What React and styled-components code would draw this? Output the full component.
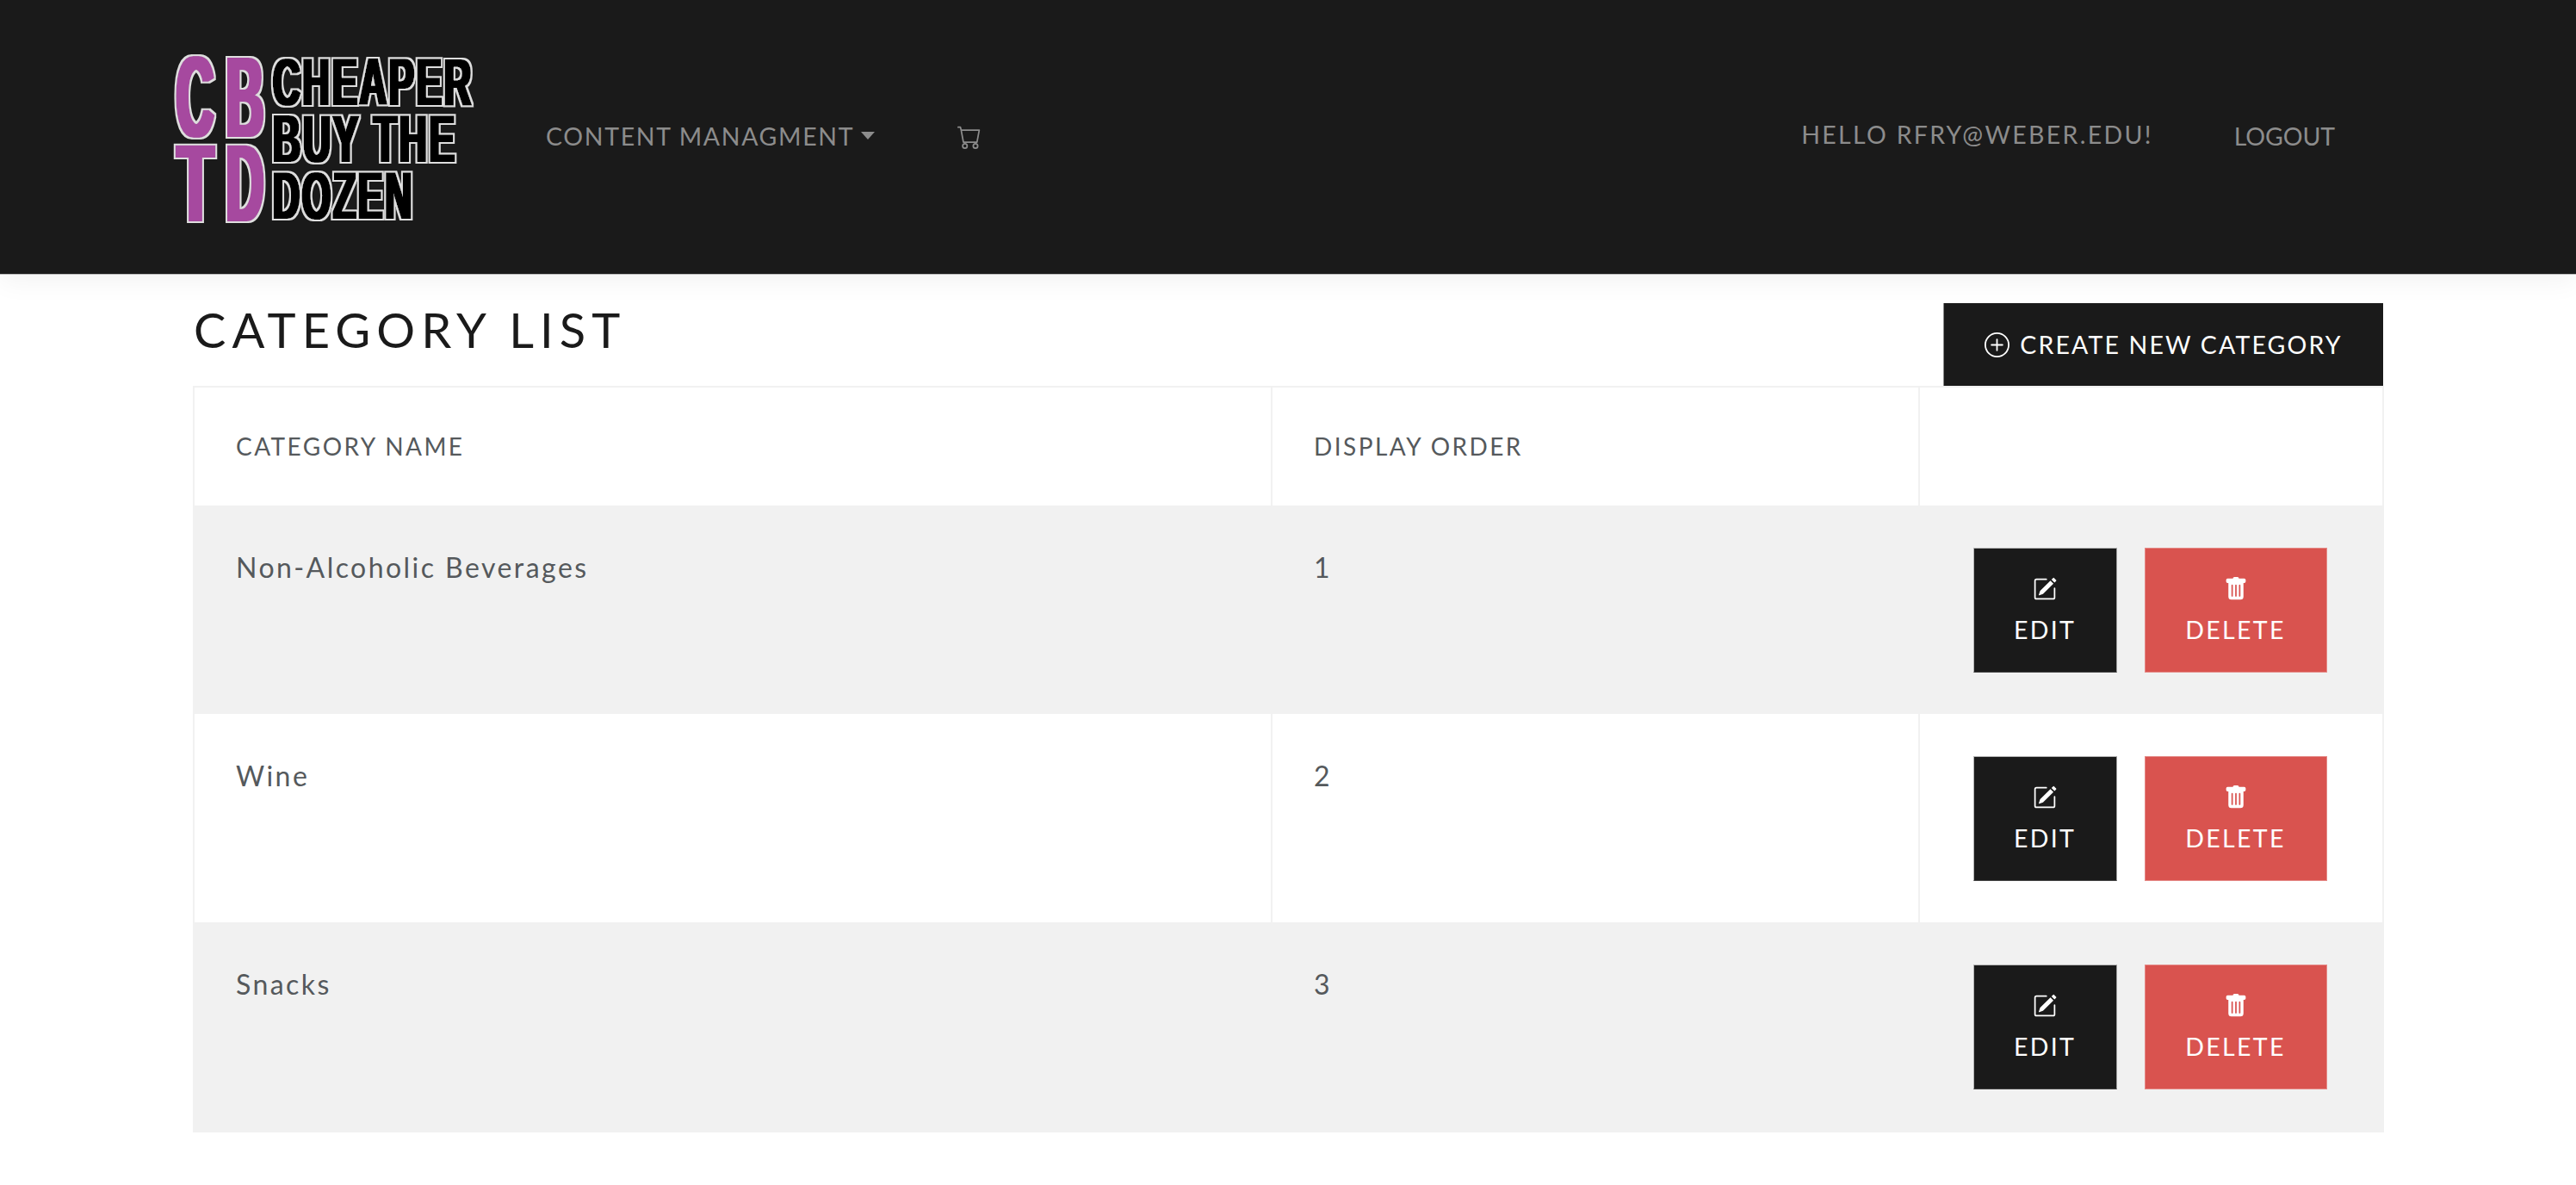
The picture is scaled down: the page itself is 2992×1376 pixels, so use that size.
import React from "react";
import styled, { createGlobalStyle } from "styled-components";
import { BsCart, BsPlusCircle, BsPencilSquare, BsTrashFill } from "react-icons/bs";

const Global = createGlobalStyle`
  html, body { margin: 0; padding: 0; background: #fff; }
  body { font-family: "Lato", "Open Sans", sans-serif; color: #55595c; overflow: hidden; }
`;

const Nav = styled.nav`
  display: flex;
  align-items: center;
  height: 318px;
  padding: 0 280px 0 200px;
  box-sizing: content-box;
  background: #1a1a1a;
  border-bottom: 1px solid #bdbdbd;
  box-shadow: 0 8px 28px rgba(0, 0, 0, 0.05);
  position: relative;
`;

const LogoWrap = styled.svg`
  display: block;
  width: 354px;
  height: 202px;
  margin-top: 5px;
  flex: none;
  overflow: visible;
`;

const NavLink = styled.a`
  font-size: 28.5px;
  line-height: 42px;
  letter-spacing: ${(p) => p.$ls || "1.65px"};
  color: #8c8c8c;
  text-transform: uppercase;
  white-space: nowrap;
  display: flex;
  align-items: center;
  margin-left: ${(p) => p.$ml || "0"};
  margin-top: ${(p) => p.$mt || "0"};
`;

const Caret = styled.span`
  display: inline-block;
  width: 0;
  height: 0;
  margin-left: 8px;
  margin-top: -2px;
  border-left: 8px solid transparent;
  border-right: 8px solid transparent;
  border-top: 9px solid #8c8c8c;
`;

const CartLink = styled.a`
  display: flex;
  margin-left: 96px;
  color: #8c8c8c;
  font-size: 28px;
`;

const Spacer = styled.div`
  flex: 1;
`;

const Main = styled.main`
  padding: 33px 224px 0;
`;

const HeadRow = styled.div`
  display: flex;
  justify-content: space-between;
  align-items: flex-start;
`;

const Title = styled.h1`
  margin: 0 0 0 1px;
  font-size: 56px;
  font-weight: 400;
  line-height: 62px;
  letter-spacing: 7.1px;
  color: #1a1a1a;
  text-transform: uppercase;
`;

const CreateButton = styled.button`
  display: flex;
  align-items: center;
  justify-content: center;
  gap: 12px;
  width: 511px;
  height: 96px;
  border: 0;
  border-left: 1px solid #8c8c8c;
  background: #1a1a1a;
  color: #fff;
  font: inherit;
  font-size: 28.5px;
  letter-spacing: 2.15px;
  text-transform: uppercase;
  padding: 0;
  svg { font-size: 29px; }
`;

const Table = styled.table`
  width: 2543px;
  table-layout: fixed;
  border-collapse: collapse;
  border: 2px solid #f1f1f1;
`;

const HeadCell = styled.th`
  height: 138px;
  padding: 0 48px 1px;
  box-sizing: border-box;
  border: 2px solid #f1f1f1;
  border-bottom: 0;
  font-size: 28px;
  font-weight: 400;
  letter-spacing: 2.45px;
  text-align: left;
  text-transform: uppercase;
  color: #55595c;
  background: #fff;
`;

const Row = styled.tr`
  background: ${(p) => (p.$striped ? "#f1f1f1" : "#fff")};
`;

const Cell = styled.td`
  vertical-align: top;
  padding: 48px;
  box-sizing: border-box;
  border-left: 2px solid #f1f1f1;
  border-right: 2px solid #f1f1f1;
  font-size: 32px;
  line-height: 48px;
  letter-spacing: 2.45px;
  color: #55595c;
`;

const ActionCell = styled(Cell)`
  padding: 49px 3px 48px 0;
`;

const Actions = styled.div`
  display: flex;
  justify-content: center;
  gap: 32px;
`;

const ActionButton = styled.button`
  display: flex;
  flex-direction: column;
  align-items: center;
  justify-content: center;
  box-sizing: border-box;
  width: ${(p) => p.$w};
  height: 145px;
  padding: 4px 0 0;
  border: 1px solid;
  border-color: ${(p) => p.$edge};
  background: ${(p) => p.$bg};
  color: #fff;
  font: inherit;
  font-size: 28.5px;
  line-height: 42px;
  letter-spacing: 2.3px;
  text-transform: uppercase;
  svg { font-size: 28px; display: block; margin-bottom: 12px; }
`;

const LogoText = styled.text`
  font-family: "Liberation Sans", sans-serif;
  font-weight: 700;
`;

const logoWords = [
  { t: "C", x: 5, y: 98, w: 43, s: 134, f: "url(#purple)" },
  { t: "B", x: 63, y: 98, w: 43, s: 134, f: "url(#purple)" },
  { t: "T", x: 6, y: 196, w: 42, s: 128, f: "url(#purple)" },
  { t: "D", x: 63, y: 196, w: 43, s: 128, f: "url(#purple)" },
  { t: "CHEAPER", x: 117, y: 61, w: 233, s: 78, f: "url(#dark)", ls: 5 },
  { t: "BUY THE", x: 117, y: 127, w: 214, s: 78, f: "url(#dark)", ls: 5 },
  { t: "DOZEN", x: 117, y: 193, w: 164, s: 78, f: "url(#dark)", ls: 5 },
];

const outline = (id, colour, rx, ry) => (
  <filter id={id} x="-20%" y="-20%" width="140%" height="140%">
    <feMorphology in="SourceAlpha" operator="dilate" radius={`${rx} ${ry}`} result="body" />
    <feMorphology in="body" operator="dilate" radius="1.7" result="outer" />
    <feFlood floodColor="#dedede" />
    <feComposite in2="outer" operator="in" result="line" />
    <feFlood floodColor={colour} />
    <feComposite in2="body" operator="in" result="core" />
    <feMerge result="all">
      <feMergeNode in="line" />
      <feMergeNode in="core" />
    </feMerge>
    <feGaussianBlur in="all" stdDeviation="0.3" />
  </filter>
);

const Logo = () => (
  <LogoWrap viewBox="0 0 354 202">
    <defs>
      {outline("purple", "#a6489f", 3, 0.4)}
      {outline("dark", "#000", 2, 0.4)}
    </defs>
    {logoWords.map((w) => (
      <LogoText
        key={w.t}
        x={w.x}
        y={w.y}
        fontSize={w.s}
        letterSpacing={w.ls || 0}
        textLength={w.w}
        lengthAdjust="spacingAndGlyphs"
        filter={w.f}
      >
        {w.t}
      </LogoText>
    ))}
  </LogoWrap>
);

const rows = [
  { name: "Non-Alcoholic Beverages", order: 1, striped: true },
  { name: "Wine", order: 2, striped: false },
  { name: "Snacks", order: 3, striped: true },
];

export default function App() {
  return (
    <>
      <Global />
      <Nav>
        <Logo />
        <NavLink $ml="80px" $mt="-2px">
          Content Managment
          <Caret />
        </NavLink>
        <CartLink>
          <BsCart />
        </CartLink>
        <Spacer />
        <NavLink $mt="-7px" $ls="2.3px">Hello rfry@weber.edu!</NavLink>
        <NavLink $ml="94px" $mt="-2px" $ls="-0.1px">Logout</NavLink>
      </Nav>
      <Main>
        <HeadRow>
          <Title>Category List</Title>
          <CreateButton>
            <BsPlusCircle />
            Create New Category
          </CreateButton>
        </HeadRow>
        <Table>
          <colgroup>
            <col style={{ width: 1252 }} />
            <col style={{ width: 752 }} />
            <col style={{ width: 539 }} />
          </colgroup>
          <thead>
            <tr>
              <HeadCell>Category Name</HeadCell>
              <HeadCell>Display Order</HeadCell>
              <HeadCell />
            </tr>
          </thead>
          <tbody>
            {rows.map((r) => (
              <Row key={r.order} $striped={r.striped}>
                <Cell>{r.name}</Cell>
                <Cell>{r.order}</Cell>
                <ActionCell>
                  <Actions>
                    <ActionButton $w="167px" $bg="#1a1a1a" $edge="#b5b5b5 #999 #444 #b5b5b5">
                      <BsPencilSquare />
                      Edit
                    </ActionButton>
                    <ActionButton $w="212px" $bg="#d9534f" $edge="#e58a87">
                      <BsTrashFill />
                      Delete
                    </ActionButton>
                  </Actions>
                </ActionCell>
              </Row>
            ))}
          </tbody>
        </Table>
      </Main>
    </>
  );
}
